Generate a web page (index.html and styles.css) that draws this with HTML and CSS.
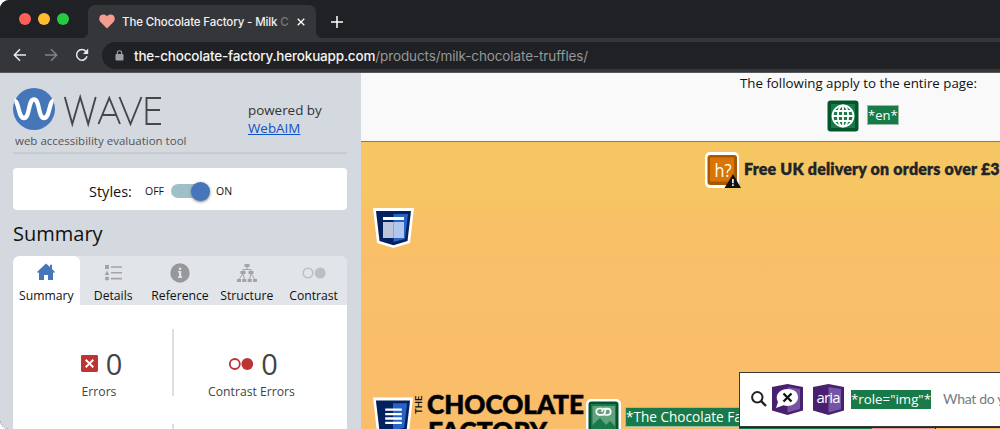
FILE: index.html
```html
<!DOCTYPE html>
<html lang="en">
<head>
<meta charset="utf-8">
<title>The Chocolate Factory - Milk Chocolate Truffles</title>
<link rel="stylesheet" href="styles.css">
</head>
<body>
<div class="window">
  <header class="tabbar">
    <div class="lights"><i class="red"></i><i class="yellow"></i><i class="green"></i></div>
    <div class="tab">
      <svg class="heart" viewBox="0 0 16 15"><path d="M8 14.5 1.3 7.8C-.4 6 .1 2.700 1.800 1.300 3.700-.1 6.300.2 8 2.300 9.700.2 12.300-.1 14.200 1.300 15.900 2.700 16.400 6 14.700 7.800Z" fill="#f59c90"/></svg>
      <span class="tab-title">The Chocolate Factory - Milk <span class="fade">C</span></span>
      <svg class="close" viewBox="0 0 8 8"><path d="M.7.7l6.600 6.600M7.300.7.7 7.300" stroke="#fff" stroke-width="1.300"/></svg>
    </div>
    <svg class="plus" viewBox="0 0 12 12"><path d="M6 0v12M0 6h12" stroke="#fff" stroke-width="1.500"/></svg>
  </header>
  <div class="toolbar">
    <svg class="nav" viewBox="0 0 14 14"><path d="M13 7H1.500M7 1.300 1.300 7 7 12.700" fill="none" stroke="#e8e9eb" stroke-width="1.500"/></svg>
    <svg class="nav" viewBox="0 0 14 14"><path d="M1 7h11.500M7 1.300 12.700 7 7 12.700" fill="none" stroke="#808286" stroke-width="1.500"/></svg>
    <svg class="nav reload" viewBox="0 0 14 14"><path d="M12 8.300A5.300 5.300 0 1 1 11 3.500L12 4.600" fill="none" stroke="#e8e9eb" stroke-width="1.500"/><path d="M13.200.6v5.300H7.900Z" fill="#e8e9eb"/></svg>
    <div class="address">
      <svg class="lock" viewBox="0 0 9 11"><rect x=".5" y="4" width="8" height="6.500" rx="1" fill="#9aa0a6"/><path d="M2.300 5V3a2.200 2.200 0 0 1 4.400 0v2" fill="none" stroke="#9aa0a6" stroke-width="1.100"/></svg>
      <span class="url">the-chocolate-factory.herokuapp.com<span class="path">/products/milk-chocolate-truffles/</span></span>
    </div>
  </div>
  <div class="content">
    <aside class="sidebar">
      <div class="brand">
        <div class="brand-left">
          <div class="logo">
            <svg class="wave-mark" viewBox="0 0 42 42"><circle cx="21" cy="21" r="21" fill="#4576b9"/><path d="M1.500 13C6 13 5 30 11 30S15 11.500 21 11.500 25 30 31 30 36 13 40.500 13" fill="none" stroke="#fff" stroke-width="4.300"/></svg>
            <svg class="wave-word" viewBox="0 0 98 28"><path d="M.8 0 8.300 27 16.200 0 24.200 27 31.700 0M34.500 27 45.300 1 56 27M38.300 18h14M55.500 0 66.500 27 77.500 0M97 1H82.500v26H97M82.500 13H96" fill="none" stroke="#474747" stroke-width="1.900"/></svg>
          </div>
          <div class="tagline">web accessibility evaluation tool</div>
        </div>
        <div class="powered">powered by<br><a>WebAIM</a></div>
      </div>
      <div class="styles-box"><span class="styles-label">Styles:</span><span class="off">OFF</span><span class="switch"><i></i></span><span class="on">ON</span></div>
      <h2>Summary</h2>
      <nav class="tabs">
        <div class="item active"><svg viewBox="0 0 20 18"><path d="M10 .5 1 9l1 1 1-.7V17h5v-5h4v5h5V9.300l1 .7 1-1-3-3V1.800h-2v2.300Z" fill="#4576b9"/></svg><span>Summary</span></div>
        <div class="item"><svg viewBox="0 0 20 18"><path d="M2 1h4v4H2ZM4 6.500 6.300 11H1.700ZM8 2.200h11v1.600H8ZM8 8h11v1.600H8ZM8 13.800h11v1.600H8Z" fill="#a3a4a6"/><circle cx="4" cy="14.500" r="2.100" fill="#a3a4a6"/></svg><span>Details</span></div>
        <div class="item"><svg viewBox="0 0 20 20"><circle cx="10" cy="10" r="9.700" fill="#97989a"/><circle cx="10" cy="5.700" r="1.300" fill="#e1e5e9"/><path d="M8 8h3.200v5.500h1V15H8v-1.500h1V9.500H8Z" fill="#e1e5e9"/></svg><span>Reference</span></div>
        <div class="item"><svg viewBox="0 0 20 19"><path d="M7.500.5h5v3h-5ZM3.500 7.500h5v3h-5ZM11.500 7.500h5v3h-5ZM0 15.500h4v3H0ZM5.300 15.500h4v3h-4ZM10.700 15.500h4v3h-4ZM16 15.500h4v3h-4Z" fill="#a3a4a6"/><path d="M10 3v3M6 8V6h8v2M6 10 2 16M6 10l1.500 6M14 10l-1.500 6M14 10l4 6" fill="none" stroke="#a3a4a6"/></svg><span>Structure</span></div>
        <div class="item"><svg class="circles" viewBox="0 0 24 20"><circle cx="6" cy="10" r="4.800" fill="none" stroke="#bcc0c2" stroke-width="1.600"/><circle cx="18.200" cy="10" r="5.500" fill="#bcc0c2"/></svg><span>Contrast</span></div>
      </nav>
      <section class="panel">
        <div class="metric"><div class="count"><svg class="error" viewBox="0 0 18 18"><rect width="18" height="18" rx="1.500" fill="#bb3535"/><path d="M5 5l8 8M13 5l-8 8" stroke="#fff" stroke-width="2"/></svg><b>0</b></div><span>Errors</span></div>
        <div class="rules"><i></i><i></i></div>
        <div class="metric right"><div class="count"><svg class="contrast" viewBox="0 0 26 14"><circle cx="6.800" cy="7" r="5" fill="none" stroke="#bb3535" stroke-width="1.800"/><circle cx="19.300" cy="7" r="5.900" fill="#bb3535"/></svg><b>0</b></div><span>Contrast Errors</span></div>
      </section>
    </aside>
    <main class="page">
      <section class="notice">
        <p>The following apply to the entire page:</p>
        <div class="notice-icons">
          <svg class="globe" viewBox="0 0 34 34"><rect width="34" height="34" rx="5" fill="#fff"/><rect x="1.500" y="1.500" width="31" height="31" rx="3" fill="#03552b"/><rect x="5" y="5" width="24" height="24" fill="#187a48"/><g fill="none" stroke="#fff" stroke-width="1.800"><circle cx="17" cy="17" r="10.500"/><ellipse cx="17" cy="17" rx="5.200" ry="10.500"/><path d="M17 6.500v21M6.500 17h21M8.500 12h17M8.500 22h17"/></g></svg>
          <span class="tag">*en*</span>
        </div>
      </section>
      <section class="promo">
        <svg class="hicon" viewBox="0 0 36 37"><rect width="34" height="36" rx="5" fill="#fff"/><rect x="2.500" y="3" width="29.500" height="30" rx="3" fill="#a85802"/><rect x="5" y="5.500" width="24" height="24" fill="#d97504"/><text x="9.500" y="25" class="hq" textLength="17" lengthAdjust="spacingAndGlyphs">h?</text><path d="M28 22 36 36H19.500Z" fill="#111"/><path d="M27.900 27v4.200M27.900 32.300V34" stroke="#fff" stroke-width="1.600"/></svg>
        <span>Free UK delivery on orders over £3</span>
      </section>
      <svg class="shield header-shield" viewBox="0 0 41 40"><path d="M0 0h41l-4 35-16.500 5L4 35Z" fill="#fff"/><path d="M3 3h35l-3.500 30-14 4.300L6.500 33Z" fill="#02215e"/><path d="M20.500 6H35l-3 25-11.500 3Z" fill="#2762c5"/><path d="M10 9h21v3H10Z" fill="#fff"/><path d="M10 14h10.500v16H10Z" fill="#bcc5d9"/><path d="M20.500 14H31v16H20.500Z" fill="#afc7ee"/></svg>
      <section class="brand-row">
        <svg class="shield" viewBox="0 0 41 40"><path d="M0 0h41l-4 35-16.500 5L4 35Z" fill="#fff"/><path d="M3 3h35l-3.500 30-14 4.300L6.500 33Z" fill="#02215e"/><path d="M20.500 6H35l-3 25-11.500 3Z" fill="#2762c5"/><path d="M12.500 11.300h17v2.400h-17ZM12.500 15.800h17v2.400h-17ZM12.500 20.300h17v2.400h-17ZM12.500 24.800h17v2.400h-17Z" fill="#fff"/></svg>
        <span class="the">THE</span>
        <svg class="shop-name" viewBox="0 0 158 40"><text x="0" y="20" textLength="157" lengthAdjust="spacingAndGlyphs">CHOCOLATE</text><text x="1" y="47" textLength="119" lengthAdjust="spacingAndGlyphs">FACTORY</text></svg>
        <svg class="alt-icon" viewBox="0 0 36 36"><rect width="35" height="36" rx="5" fill="#fff"/><rect x="2.500" y="2.500" width="30" height="32" rx="3" fill="#03552b"/><path d="M5 5h25v28H5Z" fill="#187a48"/><path d="M6.500 7H29v20l-5-5-4 4-6-7-7.500 7Z" fill="#60a27d"/><g fill="none" stroke="#fff" stroke-width="1.700"><path d="M16.500 9.500h-3a3.200 3.200 0 0 0 0 6.400H16q3 0 3-3.200t3-2.700"/><path d="M18.500 16h3a3.200 3.200 0 0 0 0-6.400H19q-3 0-3 3.200"/></g></svg>
        <span class="tag alt-tag">*The Chocolate Fa</span>
      </section>
      <div class="search">
        <svg class="magnifier" viewBox="0 0 16 16"><circle cx="6.300" cy="6.300" r="5.200" fill="none" stroke="#222" stroke-width="2"/><path d="m10 10 5 5" stroke="#222" stroke-width="2.400"/></svg>
        <svg class="purple" viewBox="0 0 31 31"><path d="M0 3 15.500 0 31 3v23.500L15.500 31 0 26.500Z" fill="#48206f"/><path d="M15.500 3 28 5v20l-12.500 3.500Z" fill="#7654a5"/><path d="M6 18C2 11 8 5 15.500 5S26 9 26 13.500 21 22 15.500 22c-1.500 0-2.500-.2-4-.7L4 24Z" fill="#fff"/><path d="m11.500 9.500 8 8M19.500 9.500l-8 8" stroke="#111" stroke-width="2.300"/></svg>
        <svg class="purple aria" viewBox="0 0 31 31"><path d="M0 3 15.500 0 31 3v23.500L15.500 31 0 26.500Z" fill="#48206f"/><path d="M15.500 3 28 5v20l-12.500 3.500Z" fill="#7654a5"/><text x="3.500" y="19" class="aria-text" textLength="24">aria</text></svg>
        <span class="tag role">*role="img"*</span>
        <span class="placeholder">What do y</span>
      </div>
      <div class="underlay"></div>
    </main>
  </div>
</div>
</body>
</html>
```
FILE: styles.css
```css
* { box-sizing: border-box; }
body { margin: 0; background: #fff; overflow: hidden; font-family: "Open Sans", sans-serif; color: #111; }
svg { display: block; flex: none; overflow: visible; }
.window { width: 1000px; height: 429px; overflow: hidden; border-radius: 9px 0 0 9px; background: #35363a; }

.tabbar { height: 38px; display: flex; align-items: flex-start; padding-left: 19px; background: #202124; }
.lights { display: flex; gap: 7px; margin-top: 13px; }
.lights i { width: 12px; height: 12px; border-radius: 50%; }
.red { background: #fe5f57; }
.yellow { background: #febc2e; }
.green { background: #28c840; }
.tab { position: relative; display: flex; align-items: center; width: 228px; height: 33px; margin: 5px 0 0 19px; padding: 0 11px; border-radius: 7px 7px 0 0; background: #35363a; }
.tab::before, .tab::after { content: ""; position: absolute; bottom: 0; width: 7px; height: 7px; }
.tab::before { left: -7px; background: radial-gradient(circle at 0 0, #202124 7px, #35363a 7.5px); }
.tab::after { right: -7px; background: radial-gradient(circle at 100% 0, #202124 7px, #35363a 7.5px); }
.heart { width: 16px; height: 15px; }
.tab-title { width: 167px; margin-left: 7px; white-space: nowrap; color: #f1f1f2; font: 500 11.5px/16px Inter, sans-serif; letter-spacing: -.13px; }
.fade { color: #77787b; }
.close { width: 8px; height: 8px; margin-left: 8px; }
.plus { width: 12px; height: 12px; margin: 16px 0 0 15px; }

.toolbar { height: 35px; display: flex; align-items: flex-start; padding: 4px 0 0 13px; background: #35363a; border-bottom: 1px solid #56575a; }
.nav { width: 14px; height: 14px; margin: 6px 17px 0 0; }
.reload { margin-right: 13px; }
.address { flex: none; display: flex; align-items: center; width: 920px; height: 27px; padding-left: 13px; border-radius: 14px; background: #202124; }
.lock { width: 9px; height: 11px; }
.url { margin-left: 10px; white-space: nowrap; color: #f4f4f5; font: 500 13.5px/20px Inter, sans-serif; letter-spacing: -.18px; }
.path { color: #95979b; font-weight: 400; letter-spacing: -.11px; }

.content { height: 356px; display: flex; }
.sidebar { width: 361px; flex: none; padding: 14px 14px 0 13px; background: #d4d8df; }
.brand { display: flex; height: 67px; border-bottom: 2px solid #c8cccf; }
.brand-left { width: 235px; }
.logo { display: flex; height: 44px; }
.wave-mark { width: 42px; height: 42px; margin-top: 1px; }
.wave-word { width: 98px; height: 28px; margin: 10px 0 0 9px; }
.tagline { margin: 1px 0 0 2px; font-size: 11.5px; line-height: 18px; color: #555; white-space: nowrap; }
.powered { padding-top: 14px; font-size: 13.4px; line-height: 18px; color: #333; white-space: nowrap; }
.powered a { color: #0f52c9; text-decoration: underline; }
.styles-box { display: flex; align-items: center; height: 42px; margin-top: 14px; padding: 4px 0 0 76px; border-radius: 4px; background: #fff; }
.styles-label { width: 56px; font-size: 14.5px; }
.off, .on { font-size: 10.5px; }
.off { width: 26px; }
.switch { width: 38px; height: 14px; border-radius: 7px; background: #9fc0c9; }
.switch i { display: block; width: 19px; height: 19px; margin: -2.5px 0 0 20px; border-radius: 50%; background: #4576b9; box-shadow: 0 1px 3px #777; }
.on { margin-left: 7px; }
h2 { margin: 10px 0 8px; font-size: 20px; font-weight: 400; line-height: 28px; }
.tabs { display: flex; height: 49px; border-radius: 6px 6px 0 0; overflow: hidden; background: #e1e5e9; }
.item { display: flex; flex-direction: column; align-items: center; width: 66.8px; padding-top: 7px; font-size: 12.2px; line-height: 16px; }
.item svg { width: 20px; height: 20px; margin-bottom: 5px; }
.item.active svg { margin-top: -1px; margin-bottom: 6px; }
.item .circles { width: 24px; }
.item.active { border-radius: 6px 6px 0 0; background: #fff; }
.panel { display: flex; height: 125px; background: #fff; }
.metric { display: flex; flex-direction: column; align-items: center; width: 159px; padding: 38px 0 0 13px; color: #444; font-size: 12.2px; line-height: 16px; }
.metric.right { width: 173px; padding-left: 0; padding-right: 18px; }
.count { display: flex; align-items: center; height: 41px; padding-left: 5px; }
.right .count { padding-left: 3px; }
.count b { font-size: 29px; font-weight: 400; line-height: 41px; }
.error { width: 17px; height: 17px; margin-right: 8px; }
.contrast { width: 26px; height: 14px; margin-right: 7px; }
.rules { width: 2px; padding-top: 24px; }
.rules i { display: block; height: 67px; margin-bottom: 28px; background: #dde0e3; }

.page { position: relative; width: 639px; height: 356px; overflow: hidden; background: linear-gradient(#f6c662 68px, #f6c662 125px, #f8c067 145px, #fabe6a 260px, #fabe6a); }
.notice { height: 69px; border-bottom: 1px solid #77817a; background: #f9f9fa; }
.notice p { margin: 0; padding: 0 0 0 379px; font-size: 13.3px; line-height: 20px; white-space: nowrap; }
.notice-icons { display: flex; padding-left: 465px; }
.globe { width: 34px; height: 34px; margin-top: 6px; }
.tag { display: block; background: #187a48; outline: 1px solid #9abba8; color: #fff; font-size: 13px; line-height: 18px; white-space: nowrap; }
.notice-icons .tag { width: 30px; height: 18px; margin: 13px 0 0 8px; }
.promo { display: flex; height: 66px; padding: 10px 0 0 344px; color: #222429; font: 800 16px/34px Lato, sans-serif; white-space: nowrap; }
.promo span { margin-left: 3px; letter-spacing: .18px; -webkit-text-stroke: .3px #222429; }
.hicon { width: 36px; height: 37px; }
.hq { font: 19px "Open Sans", sans-serif; fill: #fff; }
.shield { width: 41px; height: 40px; }
.header-shield { margin-left: 12px; }
.brand-row { display: flex; height: 35px; margin-top: 146px; padding-left: 12px; }
.brand-row .shield { width: 40px; margin-top: 3px; }
.the { width: 12px; height: 22px; writing-mode: vertical-rl; transform: rotate(180deg); font: 700 9.5px/12px Lato, sans-serif; text-align: center; }
.shop-name { width: 158px; height: 40px; margin-left: 2px; }
.shop-name text { font: 900 27px Lato, sans-serif; stroke: #111; stroke-width: .7px; }
.alt-icon { width: 36px; height: 36px; margin: 5px 0 0 1px; }
.alt-tag { width: 140px; height: 18px; margin: 14px 0 0 4px; font-size: 13.6px; }
.search { position: absolute; left: 378px; top: 299px; width: 270px; height: 55px; display: flex; align-items: flex-start; padding: 20px 0 0 11px; border: 1px solid #39393b; background: #fff; }
.magnifier { width: 16px; height: 16px; margin-top: -2px; }
.purple { width: 31px; height: 31px; margin: -9px 0 0 5px; }
.aria { margin-left: 10px; }
.aria-text { font: 15px "Open Sans", sans-serif; fill: #fff; }
.role { width: 80px; height: 19px; margin: -3px 0 0 7px; outline: 0; font-size: 13.3px; line-height: 19px; }
.placeholder { margin: -4px 0 0 12px; font: 14px/20px Lato, sans-serif; letter-spacing: -.3px; color: #747b84; white-space: nowrap; }
.underlay { position: absolute; left: 378px; top: 354px; width: 261px; height: 2px; border-top: 1px solid #26282e; background: linear-gradient(90deg, #187a48 133px, #e9948c 133px, #e9948c 196px, #26282e 196px, #26282e 197px, #fabe6a 197px); }
```
